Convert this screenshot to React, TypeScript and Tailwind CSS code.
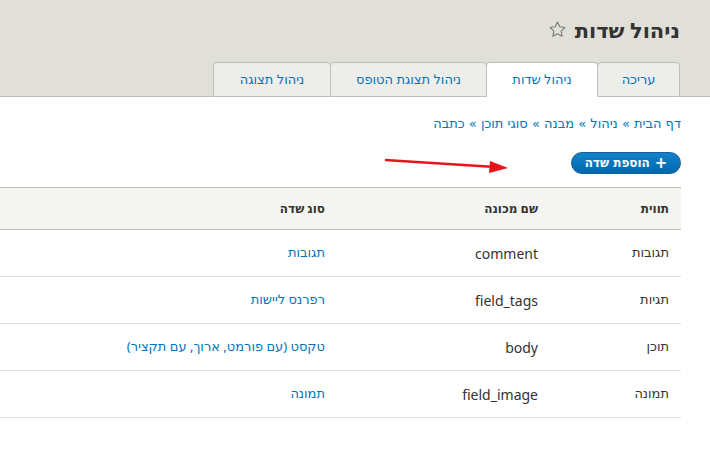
import React from "react";

const font = { fontFamily: '"Noto Sans", "DejaVu Sans", sans-serif' };
const dejavu = { fontFamily: '"DejaVu Sans", sans-serif' };

interface Field {
  label: string;
  machine: string;
  type: string;
}

const fields: Field[] = [
  { label: "תגובות", machine: "comment", type: "תגובות" },
  { label: "תגיות", machine: "field_tags", type: "רפרנס ליישות" },
  { label: "תוכן", machine: "body", type: "טקסט (עם פורמט, ארוך, עם תקציר)" },
  { label: "תמונה", machine: "field_image", type: "תמונה" },
];

const tabs = [
  { name: "עריכה", active: false, w: "w-[83px]" },
  { name: "ניהול שדות", active: true, w: "w-[112px]" },
  { name: "ניהול תצוגת הטופס", active: false, w: "w-[157px]" },
  { name: "ניהול תצוגה", active: false, w: "w-[118px]" },
];

export default function App() {
  return (
    <div dir="rtl" className="relative w-[710px] h-[473px] bg-white text-[#333] overflow-hidden" style={font}>
      {/* header */}
      <div className="h-[97px] bg-[#e0e0d8] border-b border-[#bfbfba] pr-[30px] flex flex-col">
        <div className="flex items-center gap-[8px] pt-[12px] h-[49px]">
          <h1 className="text-[21px] font-bold leading-none text-[#333]">ניהול שדות</h1>
          <svg width="19" height="19" viewBox="0 0 24 24" className="mt-[-2px]">
            <path
              d="M12 2.5l2.9 6.1 6.6.8-4.9 4.6 1.3 6.6L12 17.3l-5.9 3.3 1.3-6.6-4.9-4.6 6.6-.8z"
              fill="none"
              stroke="#7b7b74"
              strokeWidth="1.4"
              strokeLinejoin="round"
            />
          </svg>
        </div>
        <div className="flex mt-auto mb-[-1px]">
          {tabs.map((t) => (
            <div
              key={t.name}
              className={`${t.w} h-[35px] flex items-center justify-center text-[13px] text-[#0074bd] border border-[#bfbfba] rounded-t-[4px] -ml-px ${
                t.active ? "bg-white border-b-white" : "bg-[#ededea]"
              }`}
            >
              {t.name}
            </div>
          ))}
        </div>
      </div>

      {/* content */}
      <div className="pr-[29px]">
        <div className="pt-[18px] text-[13px] text-[#0074bd] leading-[18px]" style={dejavu}>
          דף הבית » ניהול » מבנה » סוגי תוכן » כתבה
        </div>
        <div className="mt-[19px] flex">
          <button className="w-[110px] h-[22px] rounded-full bg-gradient-to-b from-[#1283cb] to-[#0068ae] border border-[#1b5f94] text-white text-[12px] font-bold flex items-center justify-center gap-[5px]" style={dejavu}>
            <span className="text-[15px] leading-none">+</span>
            <span>הוספת שדה</span>
          </button>
        </div>

        <table className="mt-[13px] w-full table-fixed border-collapse text-[13px]">
          <thead>
            <tr className="h-[42px] bg-[#f5f5f2] border-y border-[#bfbfba]">
              <th className="w-[131px] text-right pr-[12px] font-bold text-[12px]">תווית</th>
              <th className="w-[213px] text-right pr-[12px] font-bold text-[12px]">שם מכונה</th>
              <th className="text-right pr-[12px] font-bold text-[12px]">סוג שדה</th>
            </tr>
          </thead>
          <tbody>
            {fields.map((f) => (
              <tr key={f.machine} className="h-[47px] border-b border-[#e0e0dc]">
                <td className="pr-[12px]">{f.label}</td>
                <td className="pr-[12px] text-[14px]">{f.machine}</td>
                <td className="pr-[12px] text-[#0074bd]">{f.type}</td>
              </tr>
            ))}
          </tbody>
        </table>
      </div>

      {/* annotation arrow */}
      <svg className="absolute left-[380px] top-[152px]" width="135" height="24" viewBox="0 0 135 24">
        <line x1="5" y1="8" x2="115" y2="15" stroke="#e8141b" strokeWidth="2.5" />
        <polygon points="128,16 110,9 109,21" fill="#e8141b" />
      </svg>
    </div>
  );
}
